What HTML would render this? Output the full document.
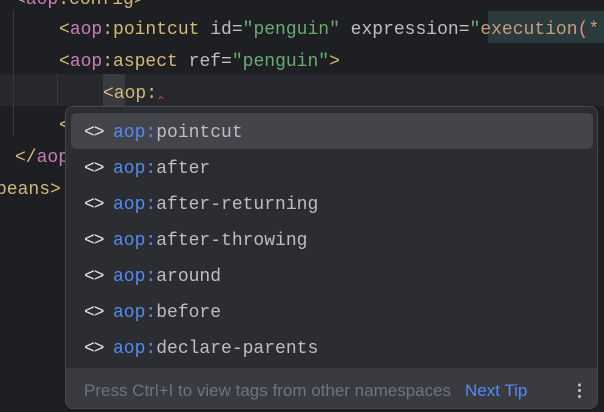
<!DOCTYPE html>
<html><head><style>
body{margin:0;width:604px;height:412px;background:#1e1f22;overflow:hidden;position:relative;font-family:"Liberation Mono",monospace}
.l{position:absolute;white-space:pre;font-size:18px;line-height:20px;color:#bcbec4}
.b{color:#d5b778}.n{color:#c77dbb}.s{color:#6aab73}
.pop{position:absolute;left:65px;top:106px;width:531px;height:301px;background:#2b2d30;border:1px solid #45474c;border-radius:8px;overflow:hidden}
.row{position:absolute;left:5px;width:522px;height:36px;border-radius:5px;font-size:18px;line-height:36px;color:#bcbec4;white-space:pre}
.row .i{position:absolute;left:13px;color:#dfe1e5;letter-spacing:-1px}
.row .t{position:absolute;left:42px}
.row .a{color:#548af7}
.foot{position:absolute;left:0;top:261px;width:531px;height:40px;background:#393b40;font-family:"Liberation Sans",sans-serif;font-size:17px;line-height:46px}
</style></head><body>
<div style="position:absolute;left:0;top:74px;width:604px;height:32px;background:#26282e"></div>
<div style="position:absolute;left:13px;top:10px;width:1px;height:126px;background:#393b40"></div>
<div style="position:absolute;left:57px;top:74px;width:1px;height:32px;background:#393b40"></div>
<div style="position:absolute;left:488px;top:11px;width:116px;height:32px;background:#2a3a3d"></div>
<div style="position:absolute;left:103px;top:74px;width:22px;height:32px;background:#393b40"></div>
<div class="l" style="left:15px;top:-10px"><span class="b">&lt;</span><span class="n">aop</span><span class="b">:config&gt;</span></div>
<div class="l" style="left:59px;top:20px"><span class="b">&lt;</span><span class="n">aop</span><span class="b">:pointcut </span>id=<span class="s">"penguin"</span> expression=<span class="s">"</span><span style="color:#cf9b7a">execution(*</span></div>
<div class="l" style="left:59px;top:52px"><span class="b">&lt;</span><span class="n">aop</span><span class="b">:aspect </span>ref=<span class="s">"penguin"</span><span class="b">&gt;</span></div>
<div class="l" style="left:103px;top:84px"><span class="b">&lt;aop:</span></div>
<div style="position:absolute;left:157px;top:96px;color:#e55;font-size:9px;font-family:'DejaVu Sans'">^</div>
<div class="l" style="left:59px;top:116px"><span class="b">&lt;</span></div>
<div class="l" style="left:15px;top:148px"><span class="b">&lt;/</span><span class="n">aop</span></div>
<div class="l" style="left:-4px;top:180px"><span class="b">beans&gt;</span></div>
<div class="pop">
<div class="row" style="top:6px;background:#43454a;line-height:40px"><span class="i">&lt;&gt;</span><span class="t"><span class="a">aop:</span>pointcut</span></div>
<div class="row" style="top:42px;line-height:40px"><span class="i">&lt;&gt;</span><span class="t"><span class="a">aop:</span>after</span></div>
<div class="row" style="top:78px;line-height:40px"><span class="i">&lt;&gt;</span><span class="t"><span class="a">aop:</span>after-returning</span></div>
<div class="row" style="top:114px;line-height:40px"><span class="i">&lt;&gt;</span><span class="t"><span class="a">aop:</span>after-throwing</span></div>
<div class="row" style="top:150px;line-height:40px"><span class="i">&lt;&gt;</span><span class="t"><span class="a">aop:</span>around</span></div>
<div class="row" style="top:186px;line-height:40px"><span class="i">&lt;&gt;</span><span class="t"><span class="a">aop:</span>before</span></div>
<div class="row" style="top:222px;line-height:40px"><span class="i">&lt;&gt;</span><span class="t"><span class="a">aop:</span>declare-parents</span></div>
<div class="foot"><span style="position:absolute;left:18px;color:#6f737a">Press Ctrl+I to view tags from other namespaces</span><span style="position:absolute;left:399px;color:#548af7">Next Tip</span><span style="position:absolute;left:505px;color:#ced0d6;font-weight:bold">⋮</span></div>
</div>
</body></html>
